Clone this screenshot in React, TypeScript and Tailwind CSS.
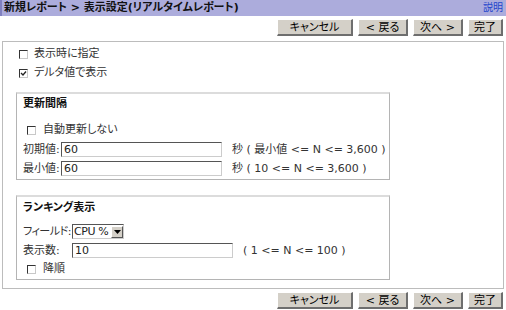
import React from "react";

const font = {
  fontFamily: '"DejaVu Sans", "Noto Sans CJK JP", sans-serif',
  fontFeatureSettings: '"palt"',
};

function Btn({ children, w }: { children: React.ReactNode; w: string }) {
  return (
    <div
      className={`${w} h-[17px] bg-[#d4d0c8] border-t border-l border-t-[#ffffff] border-l-[#ffffff] border-b-2 border-r-2 border-b-[#6e6e6e] border-r-[#6e6e6e] flex items-center justify-center text-[11px] leading-none text-black whitespace-nowrap`}
    >
      {children}
    </div>
  );
}

function Buttons() {
  return (
    <div className="flex justify-end gap-[5px] pr-[3px]">
      <Btn w="w-[76px]">キャンセル</Btn>
      <Btn w="w-[50px]">&lt; 戻る</Btn>
      <Btn w="w-[50px]">次へ &gt;</Btn>
      <Btn w="w-[35px]">完了</Btn>
    </div>
  );
}

function Check({ checked }: { checked?: boolean }) {
  return (
    <div className="w-[9px] h-[9px] border-t border-l border-t-[#333] border-l-[#333] border-b border-r border-b-[#c8c8c8] border-r-[#c8c8c8] bg-white relative shrink-0">
      {checked && (
        <svg viewBox="0 0 7 7" className="absolute left-0 top-0 w-[7px] h-[7px]">
          <path d="M1 3 L3 5 L6 1.5" stroke="#222" strokeWidth="1.3" fill="none" />
        </svg>
      )}
    </div>
  );
}

function Input({ value, w }: { value: string; w: string }) {
  return (
    <div
      className={`${w} h-[15px] bg-white border-t border-l border-t-[#555] border-l-[#555] border-b border-r border-b-[#ccc] border-r-[#ccc] flex items-center pl-[2px] text-[11px] leading-none text-[#222] shrink-0`}
    >
      {value}
    </div>
  );
}

export default function App() {
  return (
    <div
      className="w-[506px] h-[310px] bg-white text-[11px] text-[#333] leading-[12px] overflow-hidden whitespace-nowrap"
      style={font}
    >
      <div className="h-[16px] bg-[#acacdc] border-l-2 border-l-[#8080c0] flex items-center justify-between pl-[2px] pr-[3px]">
        <span className="font-bold text-[11px] text-[#111]">新規レポート &gt; 表示設定(リアルタイムレポート)</span>
        <span className="text-[10px] text-[#2244cc]">説明</span>
      </div>
      <div className="pt-[3px]">
        <Buttons />
      </div>
      <div className="mx-[2px] mt-[5px] h-[248px] border border-[#bcbcbc] pl-[13px] pt-[6px]">
        <div className="flex flex-col gap-[7px] pl-[3px]">
          <div className="h-[12px] flex items-center gap-[6px]">
            <Check />
            <span>表示時に指定</span>
          </div>
          <div className="h-[12px] flex items-center gap-[6px]">
            <Check checked />
            <span>デルタ値で表示</span>
          </div>
        </div>

        <div className="mt-[13px] w-[374px] h-[88px] border border-[#b4b4b4] border-t-2 border-t-[#dcdcdc] pl-[6px] pt-[4px]">
          <div className="h-[12px] flex items-center font-bold text-[#111]">更新間隔</div>
          <div className="h-[12px] flex items-center gap-[7px] mt-[14px] pl-[4px]">
            <Check />
            <span>自動更新しない</span>
          </div>
          <div className="h-[15px] flex items-center mt-[6px]">
            <span className="w-[38px] shrink-0">初期値:</span>
            <Input value="60" w="w-[161px]" />
            <span className="ml-[10px]">秒 ( 最小値 &lt;= N &lt;= 3,600 )</span>
          </div>
          <div className="h-[15px] flex items-center mt-[4px]">
            <span className="w-[38px] shrink-0">最小値:</span>
            <Input value="60" w="w-[161px]" />
            <span className="ml-[10px]">秒 ( 10 &lt;= N &lt;= 3,600 )</span>
          </div>
        </div>

        <div className="mt-[15px] w-[374px] h-[85px] border border-[#b4b4b4] border-t-2 border-t-[#dcdcdc] pl-[6px] pt-[5px]">
          <div className="h-[12px] flex items-center font-bold text-[#111]">ランキング表示</div>
          <div className="h-[15px] flex items-center mt-[10px]">
            <span className="shrink-0 tracking-[-0.5px] mr-[1px]">フィールド:</span>
            <div className="w-[52px] h-[15px] shrink-0 bg-white border-t border-l border-t-[#555] border-l-[#555] border-b border-r border-b-[#ccc] border-r-[#ccc] flex items-center justify-between pl-[1px]">
              <span className="text-[11px] text-[#222] tracking-[-0.4px]">CPU %</span>
              <div className="w-[12px] h-[12px] shrink-0 bg-[#d4d0c8] border-t border-l border-t-white border-l-white border-b border-r border-b-[#555] border-r-[#555] flex items-center justify-center">
                <svg viewBox="0 0 7 4" className="w-[7px] h-[4px]"><path d="M0 0 H7 L3.5 4 Z" fill="#000" /></svg>
              </div>
            </div>
          </div>
          <div className="h-[15px] flex items-center mt-[4px]">
            <span className="w-[49px] shrink-0">表示数:</span>
            <Input value="10" w="w-[161px]" />
            <span className="ml-[10px]">( 1 &lt;= N &lt;= 100 )</span>
          </div>
          <div className="h-[12px] flex items-center gap-[7px] mt-[5px] pl-[4px]">
            <Check />
            <span>降順</span>
          </div>
        </div>
      </div>
      <div className="pt-[3px]">
        <Buttons />
      </div>
    </div>
  );
}
